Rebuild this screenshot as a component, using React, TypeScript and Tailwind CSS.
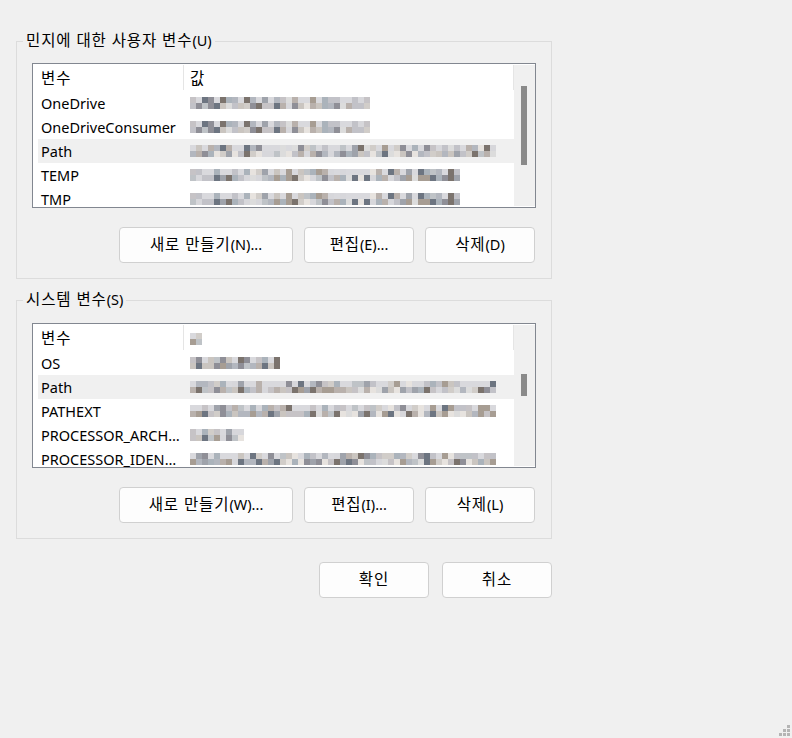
import React from 'react'

const font = {
  fontFamily: '"Segoe UI", "Noto Sans", "Noto Sans CJK KR", sans-serif',
}

const palette = [
  '#c6c3c6', '#b9b1ac', '#abb3bb', '#7b736d', '#9fa3ab', '#d7d7db',
  '#cac5c0', '#e7e3df', '#8f8f97', '#b3b7bf', '#bfc3c7', '#a79d93',
  '#d1cdc9', '#6d7581', '#dcdcdc', '#c2c2c8',
]

function rng(seed: number) {
  let s = seed
  return () => {
    s = (s * 16807) % 2147483647
    return s / 2147483647
  }
}

// Korean glyphs sit a bit larger and looser than the latin ones
function K({ children }: { children: React.ReactNode }) {
  return <span className="text-[15.5px] tracking-[0.9px]">{children}</span>
}

// pixelated (redacted) value
function Blur({ w, seed }: { w: number; seed: number }) {
  const r = rng(seed)
  const cols = Math.floor(w / 6)
  const rects: React.ReactElement[] = []
  for (let row = 0; row < 2; row++) {
    for (let c = 0; c < cols; c++) {
      const v = r()
      let color = palette[Math.floor(v * palette.length)]
      if (row === 0 && r() < 0.35) color = '#d9d9dd'
      rects.push(<rect key={row + '-' + c} x={c * 6} y={row * 6} width={6} height={6} fill={color} />)
    }
  }
  return (
    <svg width={cols * 6} height={12} className="block">
      {rects}
    </svg>
  )
}

type Row = { name: string; w: number; seed: number; sel?: boolean }

function VarList({ rows, thumbTop, thumbH, blurHeader }: { rows: Row[]; thumbTop: number; thumbH: number; blurHeader?: boolean }) {
  return (
    <div className="flex h-[145px] w-[504px] border border-[#828790] bg-white">
      <div className="flex flex-1 flex-col overflow-hidden pl-[5px]">
        <div className="flex h-[27px] shrink-0 items-start">
          <div className="flex h-[26px] w-[145px] items-center pl-[3px] pt-[3px]"><K>변수</K></div>
          <div className="mt-px h-[25px] w-px bg-[#e5e5e5]" />
          <div className="flex h-[26px] flex-1 items-center pl-[6px] pt-[3px]">
            {blurHeader ? <Blur w={12} seed={99} /> : <K>값</K>}
          </div>
          <div className="mt-px h-[25px] w-px bg-[#e5e5e5]" />
        </div>
        {rows.map((row) => (
          <div key={row.name} className={`flex h-6 shrink-0 items-center ${row.sel ? 'bg-[#f0f0f0]' : ''}`}>
            <div className="w-[145px] truncate pl-[3px] pr-[3px] pt-px">{row.name}</div>
            <div className="pl-[7px]">
              <Blur w={row.w} seed={row.seed} />
            </div>
          </div>
        ))}
      </div>
      <div className="my-px flex w-[21px] flex-col bg-[#f0f0f0]">
        <div className="ml-[7px] w-[6px] bg-[#8a8a8a]" style={{ marginTop: thumbTop, height: thumbH }} />
      </div>
    </div>
  )
}

function Btn({ children, w }: { children: React.ReactNode; w: string }) {
  return (
    <button className={`${w} h-9 rounded-[4px] border border-[#d0d0d0] bg-[#fdfdfd] text-black`}>
      {children}
    </button>
  )
}

function Group({ title, pt, children }: { title: React.ReactNode; pt: string; children: React.ReactNode }) {
  return (
    <div className={`relative w-[536px] border border-[#dcdcdc] px-[15px] ${pt} pb-[15px]`}>
      <span className="absolute -top-[12px] left-[6px] bg-[#f0f0f0] px-[3px] leading-5">{title}</span>
      {children}
    </div>
  )
}

export default function App() {
  const userRows: Row[] = [
    { name: 'OneDrive', w: 180, seed: 11 },
    { name: 'OneDriveConsumer', w: 180, seed: 11 },
    { name: 'Path', w: 306, seed: 23, sel: true },
    { name: 'TEMP', w: 270, seed: 37 },
    { name: 'TMP', w: 270, seed: 37 },
  ]
  const sysRows: Row[] = [
    { name: 'OS', w: 90, seed: 51 },
    { name: 'Path', w: 306, seed: 63, sel: true },
    { name: 'PATHEXT', w: 306, seed: 77 },
    { name: 'PROCESSOR_ARCHITECTURE', w: 54, seed: 81 },
    { name: 'PROCESSOR_IDENTIFIER', w: 306, seed: 93 },
  ]

  return (
    <div className="relative h-[738px] w-[792px] overflow-hidden bg-[#f0f0f0] pl-4 pt-[41px] text-[14.5px] text-black" style={font}>
      <Group title={<><K>민지에 대한 사용자 변수</K>(U)</>} pt="pt-[21px]">
        <VarList rows={userRows} thumbTop={21} thumbH={79} />
        <div className="mt-[19px] flex justify-end gap-[11px] pr-px">
          <Btn w="w-[174px]"><K>새로 만들기</K>(N)...</Btn>
          <Btn w="w-[110px]"><K>편집</K>(E)...</Btn>
          <Btn w="w-[110px]"><K>삭제</K>(D)</Btn>
        </div>
      </Group>
      <div className="mt-[21px]">
        <Group title={<><K>시스템 변수</K>(S)</>} pt="pt-[22px]">
          <VarList rows={sysRows} thumbTop={49} thumbH={22} blurHeader />
          <div className="mt-[19px] flex justify-end gap-[11px] pr-px">
            <Btn w="w-[174px]"><K>새로 만들기</K>(W)...</Btn>
            <Btn w="w-[110px]"><K>편집</K>(I)...</Btn>
            <Btn w="w-[110px]"><K>삭제</K>(L)</Btn>
          </div>
        </Group>
      </div>
      <div className="mt-[23px] flex w-[536px] justify-end gap-[13px]">
        <Btn w="w-[110px]"><K>확인</K></Btn>
        <Btn w="w-[110px]"><K>취소</K></Btn>
      </div>
      <svg width="12" height="12" className="absolute bottom-[2px] right-[2px]" viewBox="0 0 12 12">
        <rect x="9" y="1" width="3" height="3" fill="#b4b4b4" />
        <rect x="5" y="5" width="3" height="3" fill="#b4b4b4" />
        <rect x="9" y="5" width="3" height="3" fill="#b4b4b4" />
        <rect x="1" y="9" width="3" height="3" fill="#b4b4b4" />
        <rect x="5" y="9" width="3" height="3" fill="#b4b4b4" />
        <rect x="9" y="9" width="3" height="3" fill="#b4b4b4" />
      </svg>
    </div>
  )
}
